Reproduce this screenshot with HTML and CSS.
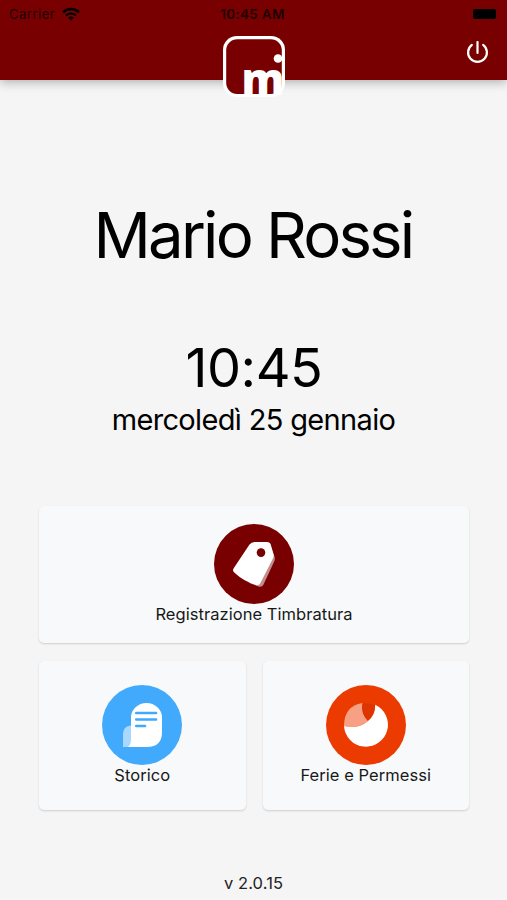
FILE: index.html
```html
<!DOCTYPE html>
<html lang="it">
<head>
    <meta charset="UTF-8">
    <meta name="viewport" content="width=device-width, initial-scale=1.0">
    <title>Timbrature</title>
    <link rel="stylesheet" href="styles.css">
</head>
<body>
    <header class="header">
        <div class="status-bar">
            <div class="carrier">
                <span>Carrier</span>
                <svg class="wifi" viewBox="0 0 18 14">
                    <path d="M1 5.2a11.5 11.5 0 0 1 16 0" fill="none" stroke="#000" stroke-width="2.6"/>
                    <path d="M4 8.5a7.2 7.2 0 0 1 10 0" fill="none" stroke="#000" stroke-width="2.2"/>
                    <path d="M6.2 10.8a4 4 0 0 1 5.6 0L9 13.6z"/>
                </svg>
            </div>
            <div class="clock">10:45 AM</div>
            <div class="battery"></div>
        </div>
        <div class="toolbar">
            <button class="logout" aria-label="Esci">
                <svg viewBox="0 0 22 22" fill="none" stroke="#fff" stroke-width="2.1" stroke-linecap="round">
                    <path d="M11 1v10.5"/>
                    <path d="M5.6 3.800a9 9 0 1 0 10.800 0"/>
                </svg>
            </button>
        </div>
        <svg class="logo" viewBox="0 0 62 62">
            <rect width="62" height="61" rx="14" fill="#fff"/>
            <rect x="3.2" y="3.2" width="55.6" height="54.800" rx="11" fill="#780000"/>
            <text class="logo-text" x="18.5" y="59" textLength="43" lengthAdjust="spacingAndGlyphs">m</text>
            <circle cx="55" cy="22.5" r="4.3" fill="#fff"/>
        </svg>
    </header>

    <main class="content">
        <h1 class="name">Mario Rossi</h1>
        <div class="time">10:45</div>
        <div class="date">mercoledì 25 gennaio</div>

        <div class="cards">
            <a class="card card-wide">
                <svg class="icon" viewBox="0 0 80 80">
                    <circle cx="40" cy="40" r="40" fill="#780000"/>
                    <path d="M57 24l3.500 8.500q.8 2.500-.3 5L49.500 60.500q-1.500 3-5 2l-9-3.500z" fill="#c48c8c"/>
                    <path d="M35.500 20.500Q37.500 18 40.500 18H53q3 0 3.800 2.800l2.700 9.200q.6 2.300-.6 4.500L46.200 59.500q-1.500 2.500-4.200 1.500Q30 57.500 20.500 48.700q-2.500-2-.8-4.500z" fill="#fff"/>
                    <circle cx="47" cy="28.600" r="4.300" fill="#780000"/>
                </svg>
                <span>Registrazione Timbratura</span>
            </a>
            <a class="card">
                <svg class="icon" viewBox="0 0 80 80">
                    <circle cx="40" cy="40" r="40" fill="#42aafc"/>
                    <path d="M29 40.500q-8 .5-8 8.500v13h8z" fill="#a9d8ff"/>
                    <path d="M26 62q3-2 3-7V32.500a15.500 14.500 0 0 1 31 0V47q0 15-15 15z" fill="#fff"/>
                    <path d="M34.300 28H54M34.300 34.500H54M34.300 41H43" fill="none" stroke="#42aafc" stroke-width="2.700" stroke-linecap="round"/>
                </svg>
                <span>Storico</span>
            </a>
            <a class="card">
                <svg class="icon" viewBox="0 0 80 80">
                    <circle cx="40" cy="40" r="40" fill="#eb3b00"/>
                    <path d="M18 41Q18 21 36.500 18q-2 10 5.500 18-11 8.500-24 5z" fill="#f7a084"/>
                    <path d="M36.500 18.500q6-1 12.700 1.700Q49 29 42 36q-7.500-8-5.500-17.500z" fill="#dd3500"/>
                    <path d="M18 41q14 3.500 24-5 7.500-6 7.200-16.300A22 22 0 1 1 18 41z" fill="#fff"/>
                </svg>
                <span>Ferie e Permessi</span>
            </a>
        </div>
    </main>

    <footer class="version">v 2.0.15</footer>
</body>
</html>
```
FILE: styles.css
```css
* {
    box-sizing: border-box;
}
body {
    display: flex;
    flex-direction: column;
    height: 900px;
    margin: 0;
    background-color: #f5f5f5;
    color: #000;
    font-family: Inter, "Liberation Sans", sans-serif;
}
.header {
    position: relative;
    height: 80px;
    background-color: #780000;
    box-shadow: 0 2px 10px rgba(0, 0, 0, 0.3);
}
.status-bar {
    display: grid;
    grid-template-columns: 1fr auto 1fr;
    align-items: center;
    height: 27px;
    padding: 0 11px 0 9px;
    font-size: 13px;
    color: #210000;
}
.carrier {
    display: flex;
    align-items: center;
    gap: 7px;
    letter-spacing: 0.5px;
}
.wifi {
    width: 18px;
    height: 14px;
}
.clock {
    font-weight: 600;
    font-size: 13.5px;
    letter-spacing: 0.3px;
}
.battery {
    justify-self: end;
    width: 23px;
    height: 10px;
    border-radius: 2px;
    background-color: #000;
}
.toolbar {
    display: flex;
    justify-content: flex-end;
    align-items: center;
    height: 51px;
    padding-right: 18px;
}
.logout {
    display: flex;
    padding: 0;
    border: none;
    background: none;
}
.logout svg {
    width: 23px;
    height: 23px;
}
/* logo hangs over the bottom edge of the header */
.logo {
    position: absolute;
    top: 36px;
    left: 50%;
    width: 62px;
    height: 62px;
    overflow: visible;
    transform: translateX(-50%);
}
.logo-text {
    font-family: "Open Sans", sans-serif;
    font-size: 44px;
    font-weight: 800;
    fill: #fff;
}
.content {
    flex: 1;
    padding: 115px 38px 0 39px;
    text-align: center;
}
.name {
    margin: 0 2px 0 0;
    font-size: 63.5px;
    font-weight: 400;
    line-height: 79px;
    letter-spacing: -2.8px;
}
.time {
    margin-top: 59px;
    font-size: 54px;
    line-height: 70px;
    letter-spacing: -0.5px;
}
.date {
    margin-right: 1px;
    font-size: 29px;
    line-height: 34px;
    letter-spacing: -0.65px;
}
.cards {
    display: grid;
    grid-template-columns: 1fr 1fr;
    grid-template-rows: 137px 149px;
    gap: 18px 17px;
    margin-top: 69px;
}
.card {
    display: flex;
    flex-direction: column;
    align-items: center;
    padding-top: 24px;
    border-radius: 5px;
    background-color: #f7f9fb;
    box-shadow: 0 1px 2px rgba(0, 0, 0, 0.16);
    font-size: 16.5px;
    line-height: 21px;
    letter-spacing: 0.05px;
    color: #181818;
}
.card-wide {
    grid-column: 1 / 3;
    padding-top: 18px;
}
.icon {
    width: 80px;
    height: 80px;
}
.version {
    height: 35px;
    font-size: 16.5px;
    line-height: 36px;
    letter-spacing: 0.1px;
    text-align: center;
    color: #222;
}
```
